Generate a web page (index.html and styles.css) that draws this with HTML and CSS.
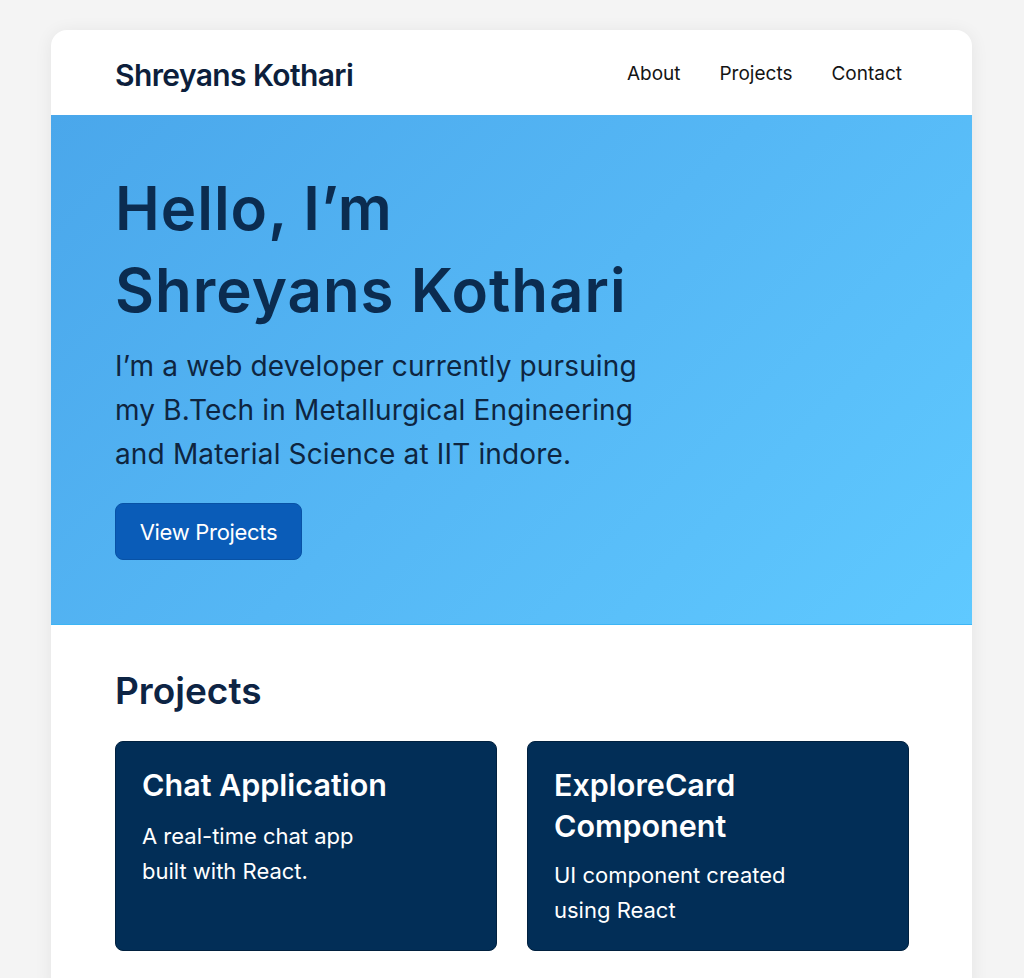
FILE: index.html
```html
<!DOCTYPE html>
<html lang="en">
<head>
<meta charset="utf-8">
<title>Shreyans Kothari</title>
<link rel="stylesheet" href="styles.css">
</head>
<body>
<div class="page">
  <header class="site-header">
    <div class="logo">Shreyans Kothari</div>
    <nav class="nav">
      <a href="#about">About</a>
      <a href="#projects">Projects</a>
      <a href="#contact">Contact</a>
    </nav>
  </header>
  <section class="hero">
    <h1 class="hero-title">Hello, I’m<br>Shreyans Kothari</h1>
    <p class="hero-text">I’m a web developer currently pursuing my B.Tech in Metallurgical Engineering and Material Science at IIT indore.</p>
    <a class="btn" href="#projects">View Projects</a>
  </section>
  <section class="projects" id="projects">
    <h2 class="section-title">Projects</h2>
    <div class="cards">
      <div class="card">
        <h3 class="card-title">Chat Application</h3>
        <p class="card-text">A real-time chat app built with React.</p>
      </div>
      <div class="card">
        <h3 class="card-title">ExploreCard Component</h3>
        <p class="card-text">UI component created using React</p>
      </div>
    </div>
  </section>
</div>
</body>
</html>
```
FILE: styles.css
```css
* { box-sizing: border-box; }
html, body { margin: 0; padding: 0; }
body {
  background: #f4f4f4;
  font-family: Inter, "Noto Sans", "Liberation Sans", sans-serif;
  height: 978px;
  overflow: hidden;
}
.page {
  margin: 30px 52px 0 51px;
  background: #ffffff;
  border-radius: 16px 16px 0 0;
  box-shadow: 0 2px 18px rgba(0, 0, 0, 0.07);
  overflow: hidden;
  padding-bottom: 40px;
}
.site-header {
  height: 85px;
  display: flex;
  align-items: center;
  justify-content: space-between;
  padding: 5px 70px 0 64px;
}
.logo {
  font-size: 30px;
  font-weight: 600;
  color: #0d1f3c;
  letter-spacing: -0.6px;
}
.nav {
  display: flex;
  gap: 39px;
  padding-bottom: 4px;
}
.nav a {
  font-size: 19px;
  color: #141414;
  text-decoration: none;
}
.hero {
  background: linear-gradient(135deg, #4aa7eb 0%, #55b7f5 50%, #5fc9ff 100%);
  padding: 52px 64px 64px;
  border-bottom: 1px solid #3db5f5;
}
.hero-title {
  margin: 0;
  font-size: 60px;
  line-height: 82px;
  font-weight: 600;
  color: #0b2c50;
  letter-spacing: 1px;
}
.hero-text {
  margin: 13px 0 0;
  max-width: 545px;
  font-size: 28px;
  line-height: 44px;
  color: #0e2540;
  letter-spacing: 0.15px;
}
.btn {
  display: inline-flex;
  align-items: center;
  justify-content: center;
  margin-top: 27px;
  width: 187px;
  height: 57px;
  background: #0a5cb8;
  border: 1px solid #0852a6;
  border-radius: 8px;
  color: #ffffff;
  font-size: 22px;
  text-decoration: none;
  letter-spacing: -0.3px;
}
.projects {
  padding: 42px 63px 0 64px;
}
.section-title {
  margin: 0;
  font-size: 37px;
  line-height: 48px;
  font-weight: 600;
  color: #0d2444;
}
.cards {
  margin-top: 26px;
  display: grid;
  grid-template-columns: 1fr 1fr;
  gap: 30px;
}
.card {
  background: #022e57;
  border: 1px solid #01213f;
  border-radius: 8px;
  padding: 22px 26px 22px;
  color: #ffffff;
}
.card-title {
  margin: 0;
  font-size: 30.5px;
  line-height: 41px;
  font-weight: 600;
}
.card-text {
  margin: 14px 0 0;
  max-width: 245px;
  font-size: 22px;
  line-height: 35px;
}
.card:nth-child(2) .card-text { margin-top: 12px; }
```
